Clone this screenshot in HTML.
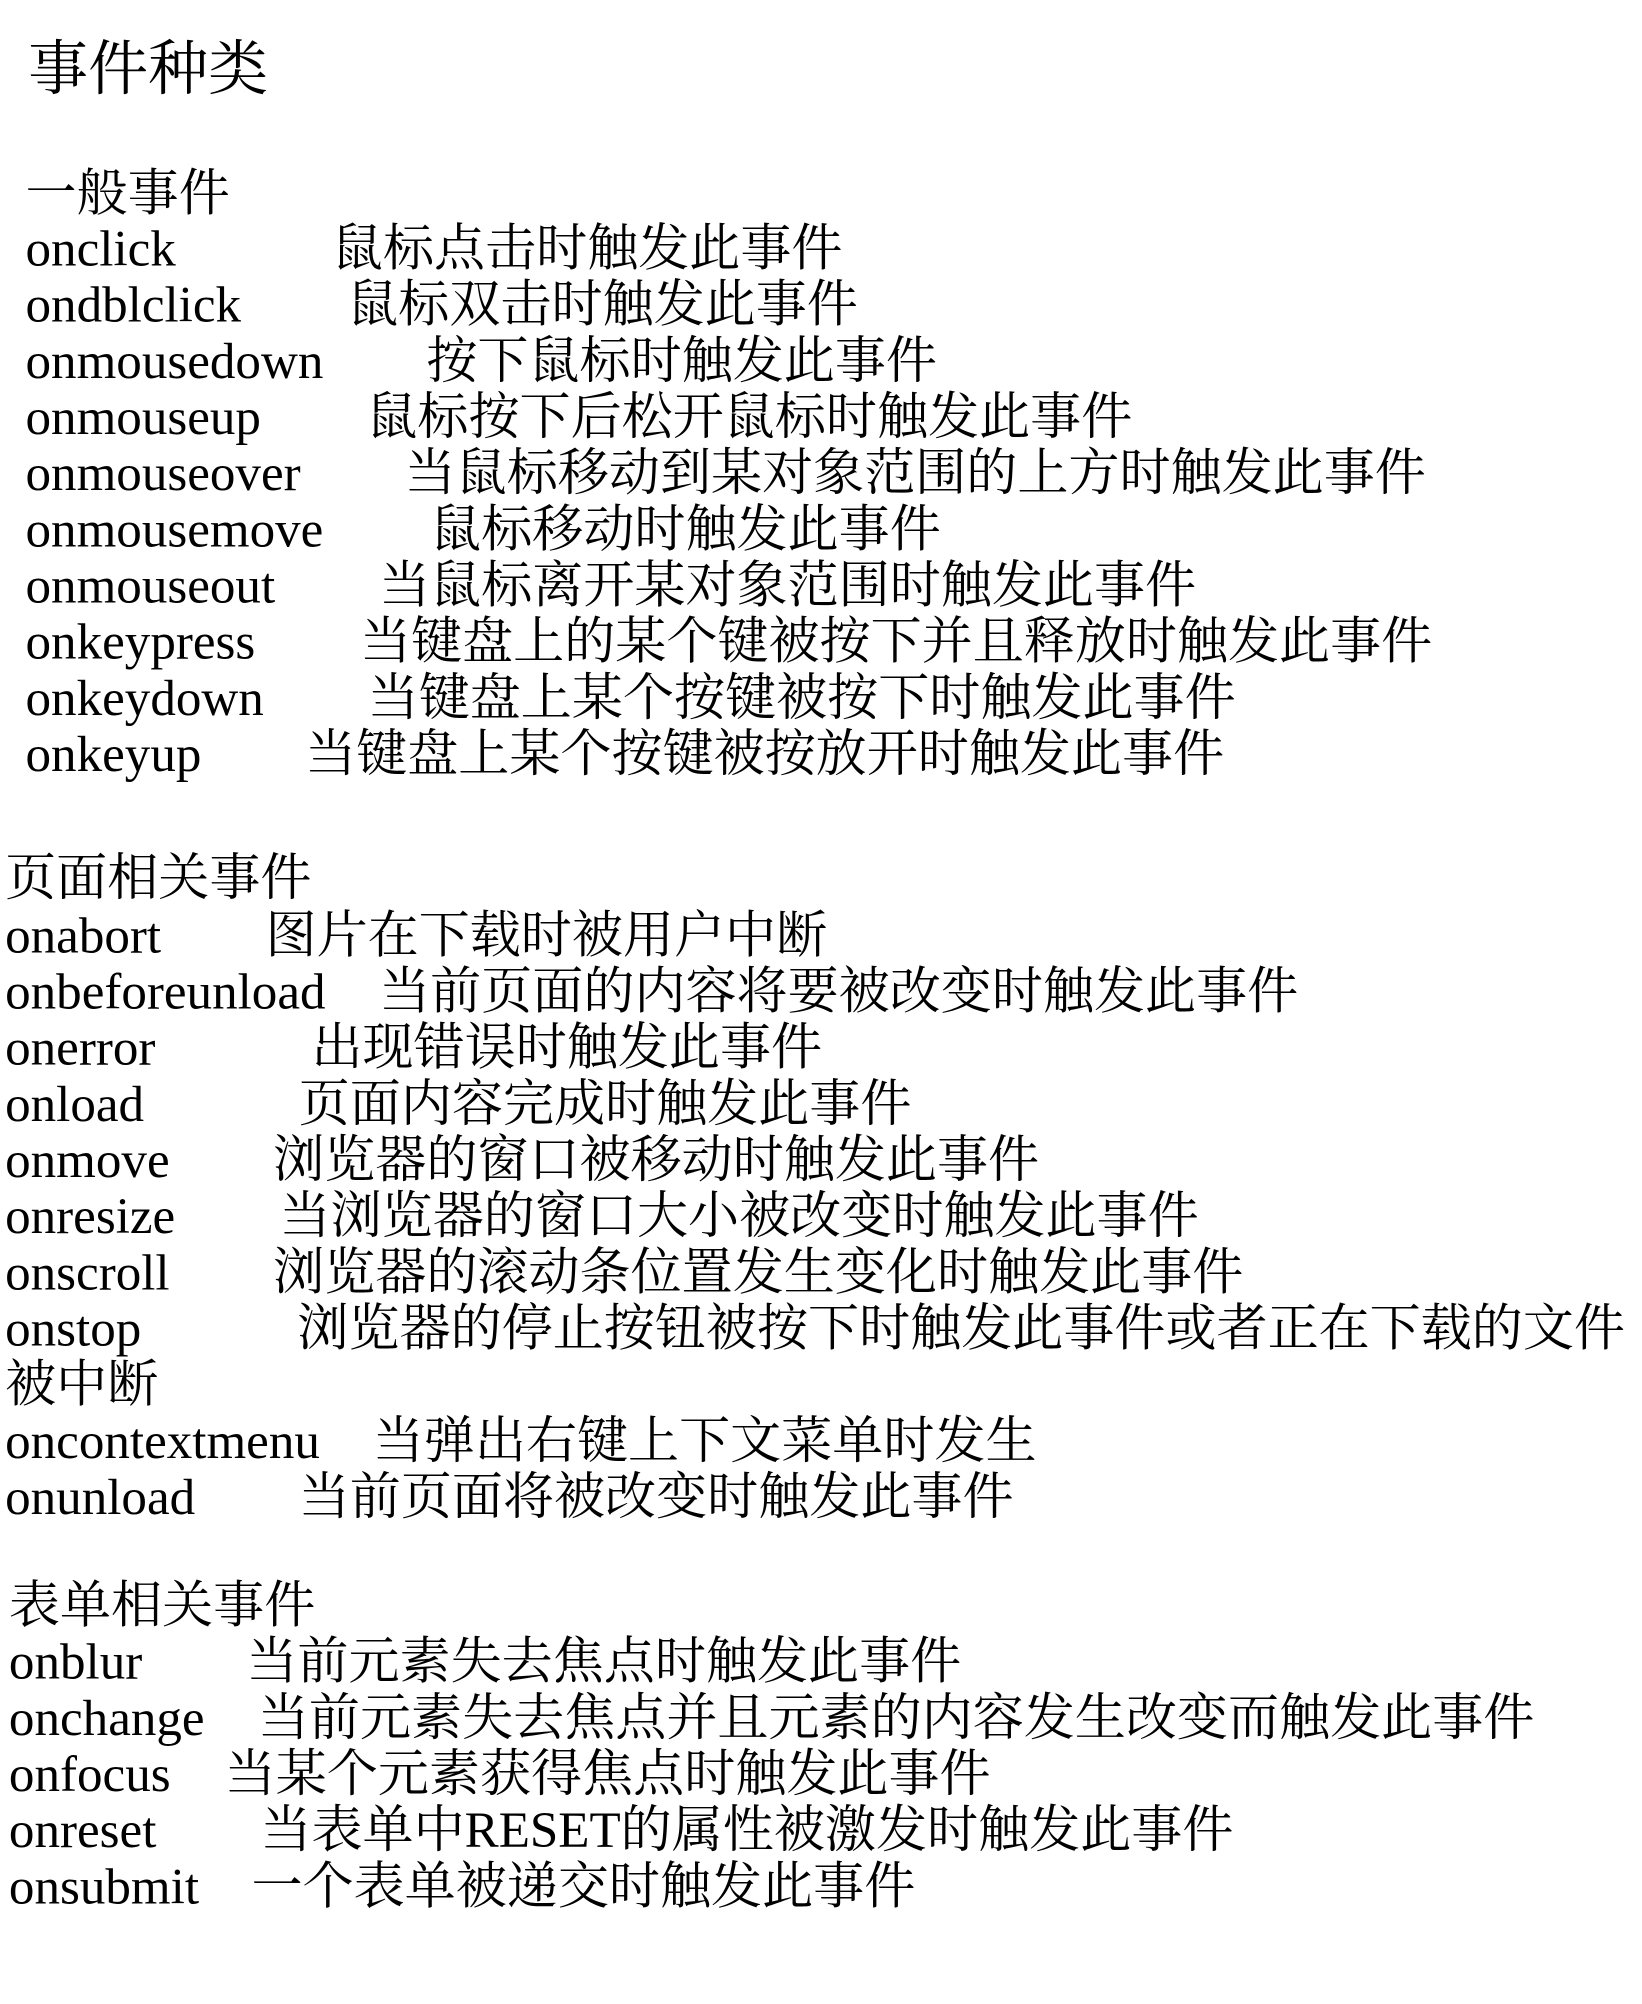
<!DOCTYPE html>
<html><head><meta charset="utf-8"><style>
html,body{margin:0;padding:0;background:#fff;width:1642px;height:2000px;overflow:hidden}
#c{position:absolute;left:0;top:0;width:1290px;height:1570px;transform:scale(1.2765);transform-origin:0 0;font-family:"Liberation Serif","Noto Serif CJK SC",serif;color:#000}
#c div{position:absolute;font-size:40px;line-height:44px;white-space:nowrap}
#c .t{font-size:47px;line-height:56px}
</style></head><body><div id="c">
<div class="t" style="left:22px;top:27px">事件种类</div>
<div style="left:20px;top:130px">一般事件</div>
<div style="left:20px;top:173px">onclick</div><div style="left:260px;top:173px">鼠标点击时触发此事件</div>
<div style="left:20px;top:217px">ondblclick</div><div style="left:272px;top:217px">鼠标双击时触发此事件</div>
<div style="left:20px;top:261px">onmousedown</div><div style="left:334px;top:261px">按下鼠标时触发此事件</div>
<div style="left:20px;top:305px">onmouseup</div><div style="left:287px;top:305px">鼠标按下后松开鼠标时触发此事件</div>
<div style="left:20px;top:349px">onmouseover</div><div style="left:317px;top:349px">当鼠标移动到某对象范围的上方时触发此事件</div>
<div style="left:20px;top:393px">onmousemove</div><div style="left:337px;top:393px">鼠标移动时触发此事件</div>
<div style="left:20px;top:437px">onmouseout</div><div style="left:297px;top:437px">当鼠标离开某对象范围时触发此事件</div>
<div style="left:20px;top:481px">onkeypress</div><div style="left:282px;top:481px">当键盘上的某个键被按下并且释放时触发此事件</div>
<div style="left:20px;top:525px">onkeydown</div><div style="left:288px;top:525px">当键盘上某个按键被按下时触发此事件</div>
<div style="left:20px;top:569px">onkeyup</div><div style="left:239px;top:569px">当键盘上某个按键被按放开时触发此事件</div>

<div style="left:4px;top:666px">页面相关事件</div>
<div style="left:4px;top:711px">onabort</div><div style="left:208px;top:711px">图片在下载时被用户中断</div>
<div style="left:4px;top:755px">onbeforeunload</div><div style="left:297px;top:755px">当前页面的内容将要被改变时触发此事件</div>
<div style="left:4px;top:799px">onerror</div><div style="left:244px;top:799px">出现错误时触发此事件</div>
<div style="left:4px;top:843px">onload</div><div style="left:234px;top:843px">页面内容完成时触发此事件</div>
<div style="left:4px;top:887px">onmove</div><div style="left:214px;top:887px">浏览器的窗口被移动时触发此事件</div>
<div style="left:4px;top:931px">onresize</div><div style="left:219px;top:931px">当浏览器的窗口大小被改变时触发此事件</div>
<div style="left:4px;top:975px">onscroll</div><div style="left:214px;top:975px">浏览器的滚动条位置发生变化时触发此事件</div>
<div style="left:4px;top:1019px">onstop</div><div style="left:233px;top:1019px">浏览器的停止按钮被按下时触发此事件或者正在下载的文件</div>
<div style="left:4px;top:1063px">被中断</div>
<div style="left:4px;top:1107px">oncontextmenu</div><div style="left:292px;top:1107px">当弹出右键上下文菜单时发生</div>
<div style="left:4px;top:1151px">onunload</div><div style="left:234px;top:1151px">当前页面将被改变时触发此事件</div>

<div style="left:7px;top:1236px">表单相关事件</div>
<div style="left:7px;top:1280px">onblur</div><div style="left:193px;top:1280px">当前元素失去焦点时触发此事件</div>
<div style="left:7px;top:1324px">onchange</div><div style="left:202px;top:1324px">当前元素失去焦点并且元素的内容发生改变而触发此事件</div>
<div style="left:7px;top:1368px">onfocus</div><div style="left:176px;top:1368px">当某个元素获得焦点时触发此事件</div>
<div style="left:7px;top:1412px">onreset</div><div style="left:204px;top:1412px">当表单中RESET的属性被激发时触发此事件</div>
<div style="left:7px;top:1456px">onsubmit</div><div style="left:197px;top:1456px">一个表单被递交时触发此事件</div>
</div></body></html>
